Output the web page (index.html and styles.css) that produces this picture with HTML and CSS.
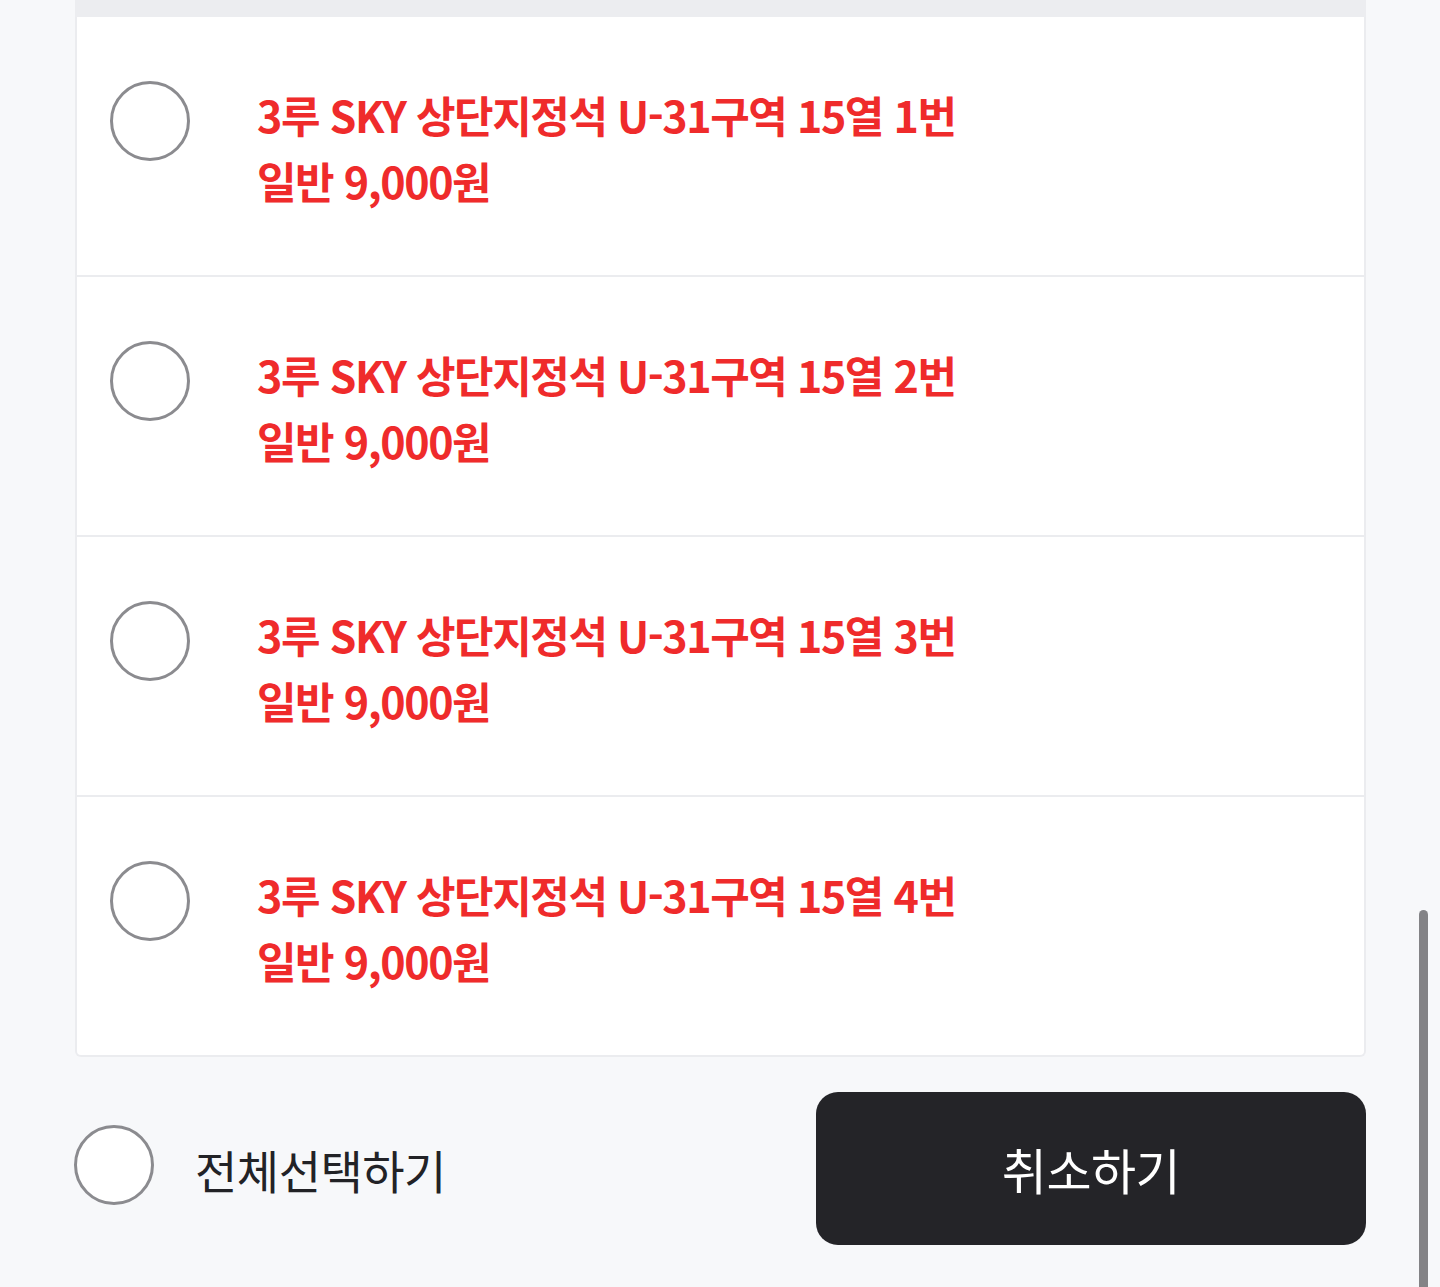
FILE: index.html
```html
<!DOCTYPE html>
<html lang="ko">
<head>
<meta charset="utf-8">
<link rel="stylesheet" href="styles.css">
</head>
<body>
<div class="page">
  <div class="top-strip"></div>
  <div class="card">
    <div class="row">
      <span class="radio"></span>
      <div class="info">
        <div class="line">3루 SKY 상단지정석 U-31구역 15열 1번</div>
        <div class="line">일반 9,000원</div>
      </div>
    </div>
    <div class="row">
      <span class="radio"></span>
      <div class="info">
        <div class="line">3루 SKY 상단지정석 U-31구역 15열 2번</div>
        <div class="line">일반 9,000원</div>
      </div>
    </div>
    <div class="row">
      <span class="radio"></span>
      <div class="info">
        <div class="line">3루 SKY 상단지정석 U-31구역 15열 3번</div>
        <div class="line">일반 9,000원</div>
      </div>
    </div>
    <div class="row">
      <span class="radio"></span>
      <div class="info">
        <div class="line">3루 SKY 상단지정석 U-31구역 15열 4번</div>
        <div class="line">일반 9,000원</div>
      </div>
    </div>
  </div>
  <div class="footer">
    <label class="select-all">
      <span class="radio"></span>
      <span class="select-text">전체선택하기</span>
    </label>
    <button class="cancel">취소하기</button>
  </div>
</div>
<div class="scrollbar"></div>
</body>
</html>
```
FILE: styles.css
```css
html, body {
  margin: 0;
  padding: 0;
  height: 100%;
}
body {
  background: #f7f8fa;
  font-family: "Noto Sans CJK KR", "Noto Sans", sans-serif;
  overflow: hidden;
}
.page {
  padding: 0 74px 0 75px;
}
.top-strip {
  height: 17px;
  background: #ecedf0;
}
.card {
  background: #ffffff;
  border: 2px solid #ebecef;
  border-top: none;
  border-radius: 0 0 6px 6px;
}
.row {
  display: flex;
  align-items: flex-start;
  height: 260px;
  box-sizing: border-box;
  padding: 64px 0 0 33px;
  border-bottom: 2px solid #ebecef;
}
.row:last-child {
  height: 258px;
  border-bottom: none;
}
.radio {
  display: block;
  flex: none;
  width: 80px;
  height: 80px;
  box-sizing: border-box;
  border: 3px solid #8b8b8f;
  border-radius: 50%;
  background: #fff;
}
.info {
  margin-left: 67px;
  color: #ef2b2b;
  font-weight: 700;
  font-size: 43px;
  line-height: 66px;
  letter-spacing: -1.45px;
}
.footer {
  display: flex;
  align-items: center;
  justify-content: space-between;
  padding-top: 35px;
}
.select-all {
  display: flex;
  align-items: center;
  margin-left: -1px;
}
.select-all .radio {
  margin-bottom: 7px;
}
.select-text {
  margin-left: 41px;
  font-size: 46px;
  color: #222226;
  letter-spacing: -0.5px;
}
.cancel {
  width: 550px;
  height: 153px;
  border: none;
  border-radius: 22px;
  background: #242428;
  color: #ffffff;
  font-family: "Noto Sans CJK KR", "Noto Sans", sans-serif;
  font-size: 49px;
  font-weight: 400;
  letter-spacing: -0.5px;
}
.scrollbar {
  position: fixed;
  right: 12px;
  top: 910px;
  width: 9px;
  bottom: 0;
  background: #838386;
  border-radius: 5px 5px 0 0;
}
```
